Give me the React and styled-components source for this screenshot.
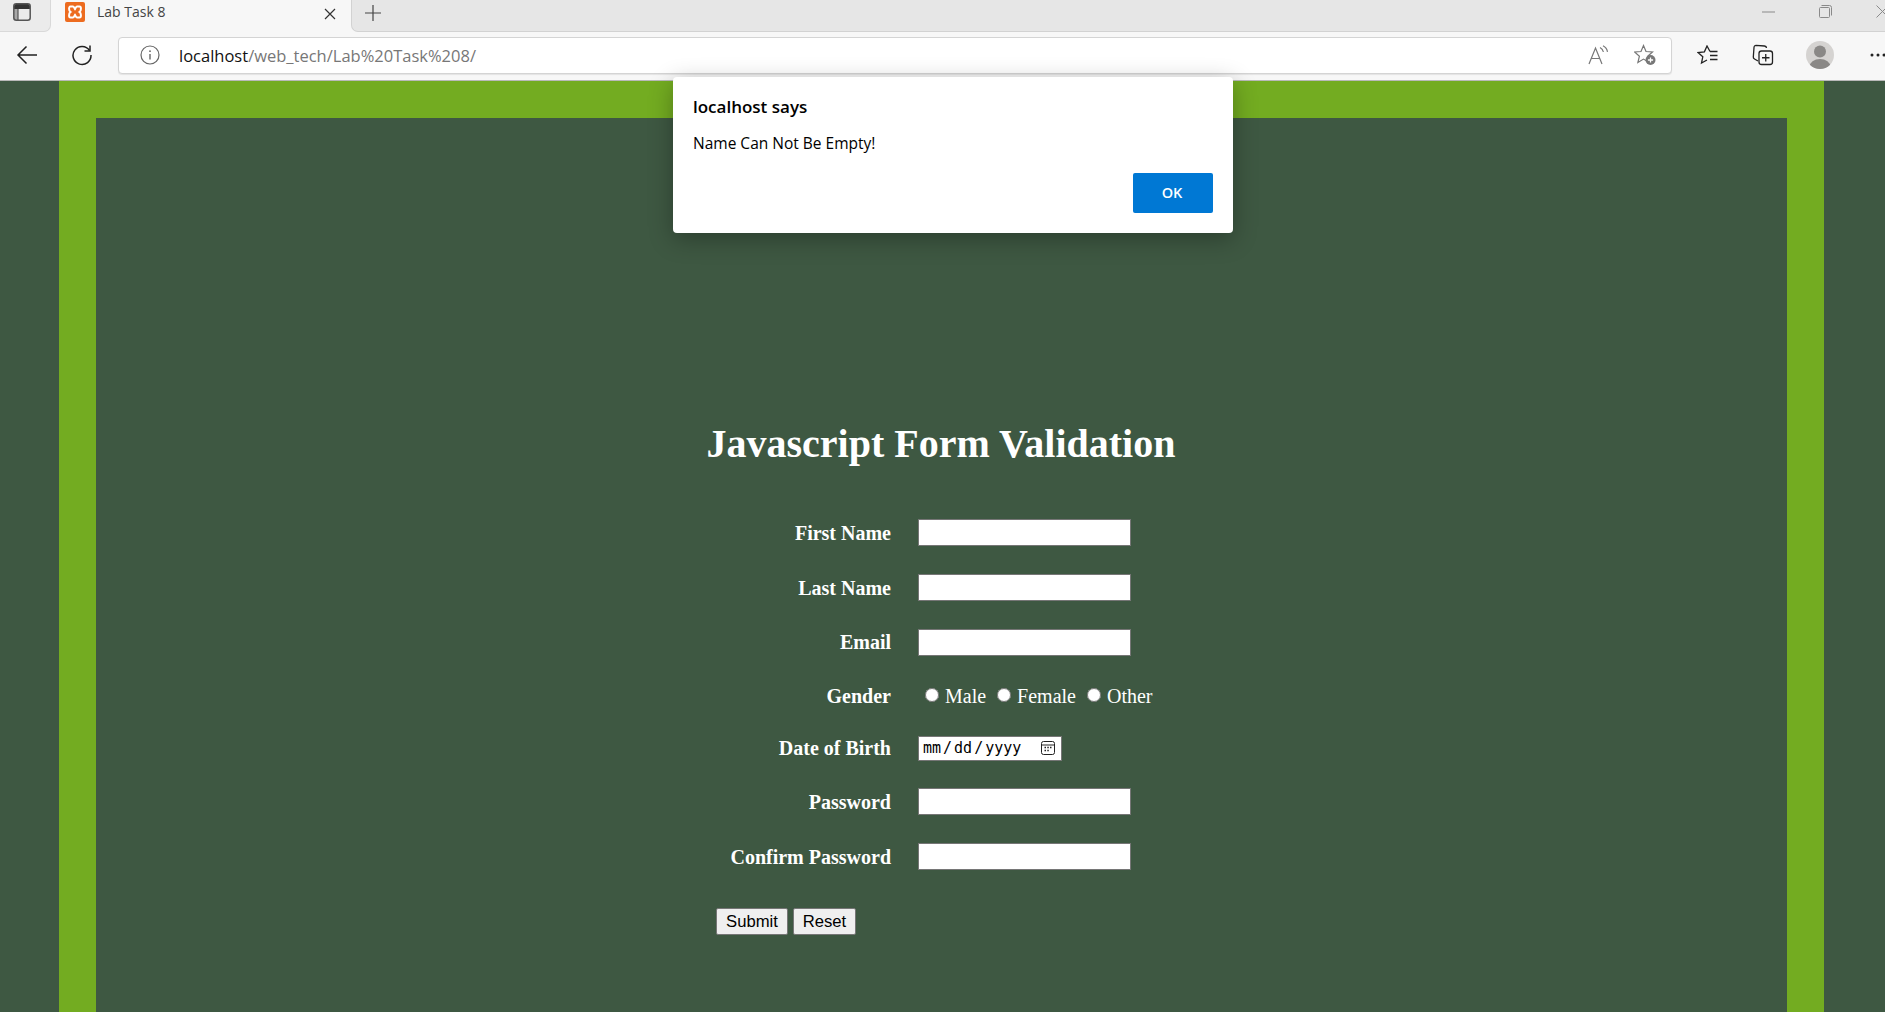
import React from "react";
import styled, { createGlobalStyle } from "styled-components";

const GlobalStyle = createGlobalStyle`
    html, body {
        margin: 0;
        height: 100%;
        overflow: hidden;
    }
    * {
        box-sizing: border-box;
    }
`

const ui = `"Open Sans", "Noto Sans", sans-serif`;

function XamppLogo () {
    return (
        <svg width="20" height="20" viewBox="0 0 20 20">
            <rect width="20" height="20" rx="2" fill="#ed6c20"/>
            <path d="M5.5 4.5h2.4c1.1 0 1.5 1.8 2.1 2.6.6-.8 1-2.6 2.1-2.6h2.4c1.9 0 1.9 4.3 0 5.5 1.9 1.2 1.9 5.5 0 5.5h-2.4c-1.1 0-1.5-1.8-2.1-2.6-.6.8-1 2.6-2.1 2.6H5.5c-1.9 0-1.9-4.3 0-5.5-1.9-1.2-1.9-5.5 0-5.5z" fill="none" stroke="#fff" strokeWidth="2"/>
        </svg>
    );
}

function TabsIcon () {
    return (
        <svg width="18" height="18" viewBox="0 0 18 18" fill="none">
            <rect x="1" y="5" width="4" height="12" fill="#a8a8a8"/>
            <path d="M1 6V3a2 2 0 0 1 2-2h12a2 2 0 0 1 2 2v3z" fill="#333"/>
            <rect x=".8" y=".8" width="16.4" height="16.4" rx="2.5" stroke="#555" strokeWidth="1.5"/>
            <path d="M5 6v11" stroke="#555" strokeWidth="1.2"/>
        </svg>
    );
}

function BackIcon () {
    return (
        <svg width="22" height="20" viewBox="0 0 22 20" fill="none" stroke="#222" strokeWidth="1.5">
            <path d="M21 10H2M10.5 1.5 2 10l8.5 8.5"/>
        </svg>
    );
}

function RefreshIcon () {
    return (
        <svg width="22" height="22" viewBox="0 0 22 22" fill="none" stroke="#222" strokeWidth="1.5">
            <path d="M18.5 6.5A9 9 0 1 0 20 11"/>
            <path d="M19 1.5v5.5h-5.5"/>
        </svg>
    );
}

function InfoIcon () {
    return (
        <svg width="20" height="20" viewBox="0 0 20 20" fill="none" stroke="#666" strokeWidth="1.2">
            <circle cx="10" cy="10" r="9"/>
            <path d="M10 9v5.5" strokeWidth="1.4"/>
            <circle cx="10" cy="6.2" r=".9" fill="#666" stroke="none"/>
        </svg>
    );
}

function ReadAloudIcon () {
    return (
        <svg width="22" height="20" viewBox="0 0 22 20" fill="none" stroke="#777" strokeWidth="1.2">
            <path d="M1 19 7.5 3 14 19M3.5 13.5h8"/>
            <path d="M12 2.5c2 1 3 2.5 3.4 4.5M15 .8c2.6 1.3 4 3.4 4.5 6"/>
        </svg>
    );
}

function StarAddIcon () {
    return (
        <svg width="22" height="22" viewBox="0 0 22 22" fill="none" stroke="#777" strokeWidth="1.2">
            <path d="M9.5 1.5 12 7.5l6.5.5-4.8 4.2 1.5 6.3-5.7-3.4-5.6 3.4 1.5-6.3L.6 8l6.4-.5z"/>
            <circle cx="16.5" cy="16" r="5" fill="#777" stroke="none"/>
            <path d="M16.5 13.4v5.2M13.9 16h5.2" stroke="#fff" strokeWidth="1.3"/>
        </svg>
    );
}

function FavoritesIcon () {
    return (
        <svg width="22" height="20" viewBox="0 0 22 20" fill="none" stroke="#222" strokeWidth="1.3">
            <path d="M13 6.5 10 1 7.4 6.8 1 7.6l4.8 4.2L4.5 18l5.5-3"/>
            <path d="M13 6.5h7.5M13 10.5h7.5M13 14.5h7.5"/>
        </svg>
    );
}

function CollectionsIcon () {
    return (
        <svg width="22" height="22" viewBox="0 0 22 22" fill="none" stroke="#222" strokeWidth="1.3">
            <path d="M6 17 2.5 15c-1-.6-1.3-1-1.2-2L2 3.5C2 2 3 1.4 4 1.4l8.5.6c1.3.1 2 .8 2 2"/>
            <rect x="7" y="7" width="13.5" height="13.5" rx="2.5"/>
            <path d="M13.75 10v7.5M10 13.75h7.5"/>
        </svg>
    );
}

function AvatarIcon () {
    return (
        <svg width="28" height="28" viewBox="0 0 28 28">
            <clipPath id="avatarClip"><circle cx="14" cy="14" r="14"/></clipPath>
            <circle cx="14" cy="14" r="14" fill="#d5d3d1"/>
            <circle cx="14" cy="10.5" r="6" fill="#8a8886"/>
            <ellipse cx="14" cy="26" rx="10.5" ry="8" fill="#8a8886" clipPath="url(#avatarClip)"/>
        </svg>
    );
}

function DotsIcon () {
    return (
        <svg width="16" height="4" viewBox="0 0 16 4" fill="#222">
            <circle cx="2" cy="2" r="1.5"/>
            <circle cx="8" cy="2" r="1.5"/>
            <circle cx="14" cy="2" r="1.5"/>
        </svg>
    );
}

function RestoreIcon () {
    return (
        <svg width="13" height="13" viewBox="0 0 13 13" fill="none" stroke="#8a8a8a">
            <rect x=".5" y="2.5" width="10" height="10" rx="1"/>
            <path d="M2.5.5h8a2 2 0 0 1 2 2v8"/>
        </svg>
    );
}

function CalendarIcon () {
    return (
        <svg width="14" height="14" viewBox="0 0 14 14" fill="none" stroke="#222" strokeWidth="1">
            <rect x=".5" y=".5" width="13" height="13" rx="2"/>
            <path d="M.5 4h13"/>
            <path d="M3.5 6.5h1.5M6.3 6.5h1.5M9 6.5h1.5M3.5 9.5h1.5M6.3 9.5h1.5" strokeWidth="1.4"/>
        </svg>
    );
}

function App () {
    return (
        <Screen>
            <GlobalStyle/>
            <TabStrip>
                <TabsButton><TabsIcon/></TabsButton>
                <Tab>
                    <XamppLogo/>
                    <TabTitle>Lab Task 8</TabTitle>
                    <TabClose>
                        <svg width="12" height="12" viewBox="0 0 12 12" stroke="#333" strokeWidth="1.2"><path d="M1 1l10 10M11 1 1 11"/></svg>
                    </TabClose>
                </Tab>
                <StripRest>
                    <NewTab>
                        <svg width="16" height="16" viewBox="0 0 16 16" stroke="#444" strokeWidth="1.2"><path d="M8 0v16M0 8h16"/></svg>
                    </NewTab>
                    <WindowControls>
                        <WindowButton>
                            <svg width="13" height="2" viewBox="0 0 13 2" stroke="#8a8a8a"><path d="M0 1h13"/></svg>
                        </WindowButton>
                        <WindowButton><RestoreIcon/></WindowButton>
                        <WindowButton>
                            <svg width="13" height="13" viewBox="0 0 13 13" stroke="#8a8a8a"><path d="M.5.5l12 12M12.5.5l-12 12"/></svg>
                        </WindowButton>
                    </WindowControls>
                </StripRest>
            </TabStrip>

            <Toolbar>
                <ToolButton><BackIcon/></ToolButton>
                <ToolButton><RefreshIcon/></ToolButton>
                <Address>
                    <InfoIcon/>
                    <Url>localhost<UrlPath>/web_tech/Lab%20Task%208/</UrlPath></Url>
                    <AddressIcon><ReadAloudIcon/></AddressIcon>
                    <AddressIcon><StarAddIcon/></AddressIcon>
                </Address>
                <ToolButton><FavoritesIcon/></ToolButton>
                <ToolButton><CollectionsIcon/></ToolButton>
                <AvatarButton><AvatarIcon/></AvatarButton>
                <ToolButton><DotsIcon/></ToolButton>
            </Toolbar>

            <Page>
                <Frame>
                    <Inner>
                        <Heading>Javascript Form Validation</Heading>
                        <Form onSubmit={(e) => e.preventDefault()}>
                            <Row $height={55}>
                                <Label>First Name</Label>
                                <TextInput type="text"/>
                            </Row>
                            <Row $height={55}>
                                <Label>Last Name</Label>
                                <TextInput type="text"/>
                            </Row>
                            <Row $height={54}>
                                <Label>Email</Label>
                                <TextInput type="email"/>
                            </Row>
                            <Row $height={53}>
                                <Label>Gender</Label>
                                <RadioGroup>
                                    <RadioLabel><Radio type="radio" name="gender"/>Male</RadioLabel>
                                    <RadioLabel><Radio type="radio" name="gender"/>Female</RadioLabel>
                                    <RadioLabel><Radio type="radio" name="gender"/>Other</RadioLabel>
                                </RadioGroup>
                            </Row>
                            <Row $height={52}>
                                <Label>Date of Birth</Label>
                                <DateField>
                                    <DateInput type="date"/>
                                    <CalendarBadge><CalendarIcon/></CalendarBadge>
                                </DateField>
                            </Row>
                            <Row $height={55}>
                                <Label>Password</Label>
                                <TextInput type="password"/>
                            </Row>
                            <Row $height={55}>
                                <Label>Confirm Password</Label>
                                <TextInput type="password"/>
                            </Row>
                            <Buttons>
                                <FormButton type="submit" $width={72}>Submit</FormButton>
                                <FormButton type="reset" $width={63}>Reset</FormButton>
                            </Buttons>
                        </Form>
                    </Inner>
                </Frame>
                <Dialog>
                    <DialogTitle>localhost says</DialogTitle>
                    <DialogText>Name Can Not Be Empty!</DialogText>
                    <DialogFooter>
                        <OkButton>OK</OkButton>
                    </DialogFooter>
                </Dialog>
            </Page>
        </Screen>
    );
};

const Screen = styled.div`
    display: flex;
    flex-direction: column;
    height: 100vh;
    overflow: hidden;
    background: #3e5842;
`

const TabStrip = styled.div`
    display: flex;
    flex: 0 0 32px;
    background: #f7f7f7;
`

const TabsButton = styled.div`
    display: flex;
    flex: 0 0 51px;
    align-items: flex-start;
    padding: 3px 0 0 13px;
    background: #ebebeb;
    border-bottom: 1px solid #d9d9d9;
    border-right: 1px solid #d9d9d9;
    border-radius: 0 0 7px 0;
`

const Tab = styled.div`
    display: flex;
    flex: 0 0 300px;
    align-items: flex-start;
    padding: 2px 15px 0 14px;
`

const TabTitle = styled.span`
    margin-left: 12px;
    font: 400 14px/20px ${ui};
    color: #444;
`

const TabClose = styled.span`
    display: flex;
    margin: 6px 0 0 auto;
`

const StripRest = styled.div`
    display: flex;
    flex: 1;
    align-items: flex-start;
    background: #e6e6e6;
    border-bottom: 1px solid #d2d2d2;
    border-left: 1px solid #d2d2d2;
    border-radius: 0 0 0 7px;
`

const NewTab = styled.div`
    display: flex;
    align-items: center;
    margin-left: 13px;
    height: 25px;
`

const WindowControls = styled.div`
    display: flex;
    margin-left: auto;
    margin-right: -26px;
`

const WindowButton = styled.div`
    display: flex;
    align-items: center;
    justify-content: center;
    width: 57px;
    height: 23px;
`

const Toolbar = styled.div`
    display: flex;
    flex: 0 0 49px;
    align-items: center;
    gap: 11px;
    padding: 0 0 2px 5px;
    background: #f7f7f7;
    border-bottom: 1px solid #b9b9b9;
`

const ToolButton = styled.div`
    display: flex;
    flex: 0 0 44px;
    align-items: center;
    justify-content: center;
    height: 36px;
`

const AvatarButton = styled(ToolButton)`
    margin: 0 3px 0 2px;
`

const Address = styled.div`
    display: flex;
    flex: 0 0 1554px;
    align-items: center;
    height: 37px;
    margin: 0 3px;
    padding: 0 3px 0 21px;
    background: #fff;
    border: 1px solid #d4d4d4;
    border-radius: 4px;
    box-shadow: 0 1px 1px rgba(0, 0, 0, 0.08);
`

const Url = styled.span`
    flex: 1;
    margin-left: 19px;
    font: 400 16.5px ${ui};
    color: #111;
`

const UrlPath = styled.span`
    color: #777;
`

const AddressIcon = styled.span`
    display: flex;
    justify-content: center;
    width: 46px;
`

const Page = styled.div`
    flex: 1;
    min-height: 0;
    padding: 0 61px 0 59px;
    position: relative;
`

const Frame = styled.div`
    height: 100%;
    padding: 37px 37px 0;
    background: #73ac21;
`

const Inner = styled.div`
    height: 100%;
    padding-top: 300px;
    background: #3e5842;
    font-family: "Liberation Serif", "Times New Roman", serif;
    color: #fff;
`

const Heading = styled.h1`
    margin: 0 0 35px;
    font-size: 40px;
    font-weight: bold;
    line-height: 52px;
    text-align: center;
    padding-right: 1px;
`

const Form = styled.form`
    width: 451px;
    margin: 0 auto;
`

const Row = styled.div`
    display: grid;
    grid-template-columns: 175px 1fr;
    column-gap: 27px;
    align-items: center;
    height: ${({$height}) => $height}px;
`

const Label = styled.label`
    padding-top: 1px;
    font-size: 20px;
    font-weight: bold;
    text-align: right;
    white-space: nowrap;
    justify-self: end;
`

const TextInput = styled.input`
    width: 213px;
    height: 27px;
    padding: 1px 2px;
    background: #fff;
    border: 1px solid #767676;
`

const RadioGroup = styled.div`
    display: flex;
    padding: 2px 0 0 3px;
    font-size: 20px;
    gap: 7px;
    white-space: nowrap;
`

const RadioLabel = styled.label`
    display: flex;
    align-items: baseline;
`

const Radio = styled.input`
    width: 14px;
    height: 14px;
    margin: 0 6px 0 4px;
    position: relative;
    top: -1px;
`

const DateField = styled.div`
    display: flex;
    width: 144px;
    position: relative;
`

const DateInput = styled.input`
    width: 144px;
    height: 25px;
    padding: 1px 3px;
    font: 400 15px "DejaVu Sans Mono", monospace;
    color: #000;
    background: #fff;
    border: 1px solid #767676;

    &::-webkit-datetime-edit-text {
        padding: 0 1px;
    }
    &::-webkit-calendar-picker-indicator {
        opacity: 0;
    }
`

const CalendarBadge = styled.span`
    position: absolute;
    top: 5px;
    right: 7px;
    display: flex;
    pointer-events: none;
`

const Buttons = styled.div`
    display: flex;
    gap: 5px;
    margin-top: 24px;
`

const FormButton = styled.button`
    width: ${({$width}) => $width}px;
    height: 27px;
    padding: 0;
    font: 400 16.67px "Liberation Sans", Arial, sans-serif;
    color: #000;
    background: #efefef;
    border: 1px solid #767676;
    border-radius: 2px;
`

const Dialog = styled.div`
    position: absolute;
    top: -4px;
    left: 673px;
    display: flex;
    flex-direction: column;
    width: 560px;
    height: 156px;
    padding: 18px 20px 20px;
    background: #fff;
    border-radius: 4px;
    box-shadow: 0 6px 24px rgba(0, 0, 0, 0.3);
    color: #000;
`

const DialogTitle = styled.div`
    font: 600 17px/24px ${ui};
`

const DialogText = styled.div`
    margin-top: 14px;
    font: 400 15.5px/20px ${ui};
`

const DialogFooter = styled.div`
    display: flex;
    justify-content: flex-end;
    margin-top: auto;
`

const OkButton = styled.button`
    width: 80px;
    height: 40px;
    padding: 0 2px 2px 0;
    font: 600 14.5px ${ui};
    color: #fff;
    background: #0078d4;
    border: none;
    border-radius: 2px;
`

export default App;
